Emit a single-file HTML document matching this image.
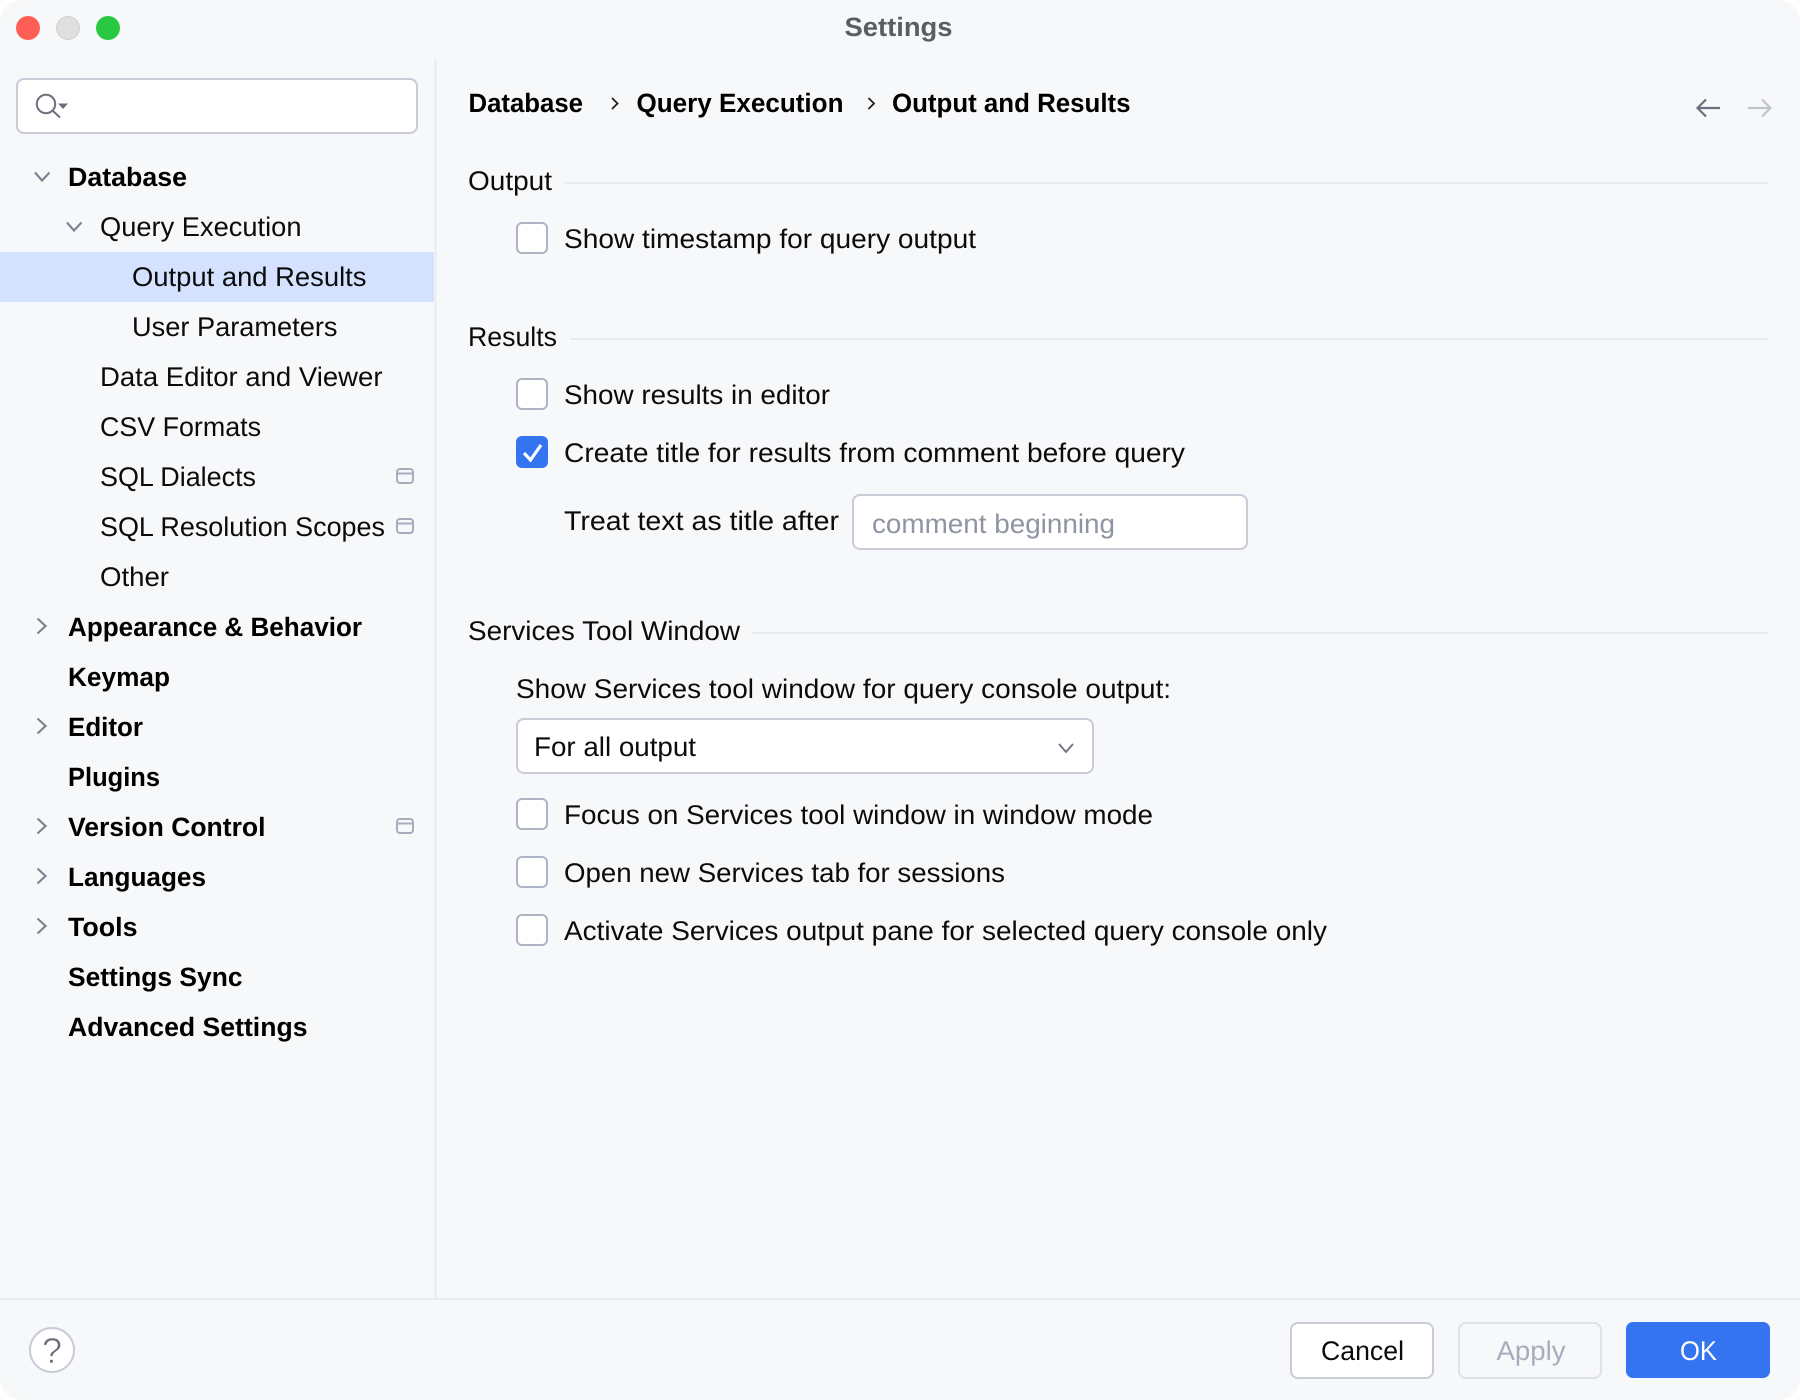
<!DOCTYPE html>
<html lang="en"><head><meta charset="utf-8"><title>Settings</title>
<style>
html,body{margin:0;padding:0;background:#fff;width:1800px;height:1400px;overflow:hidden}
svg{display:block}
text{font-family:"Liberation Sans",sans-serif;font-size:27px;fill:#0b0b0c;text-rendering:geometricPrecision}
.b{font-weight:700;font-size:26.5px;fill:#000}
.chev{fill:none;stroke:#7f8392;stroke-width:2.2}
.cb{fill:#fff;stroke:#aeb3c6;stroke-width:2}
.ln{fill:#ebecf0}
.ic{fill:none;stroke:#a8adbd;stroke-width:2}
</style></head><body>
<svg width="1800" height="1400" viewBox="0 0 1800 1400" xmlns="http://www.w3.org/2000/svg">
<rect width="1800" height="1400" rx="22" fill="#f7f8fa"/>
<!-- traffic lights -->
<circle cx="28" cy="28" r="12" fill="#ff5f57"/>
<circle cx="68" cy="28" r="11.5" fill="#e0e0e0" stroke="#cfcfcf"/>
<circle cx="108" cy="28" r="12" fill="#28c840"/>
<text class="b" x="844.500" y="36" textLength="108" lengthAdjust="spacingAndGlyphs" style="fill:#5a5d63">Settings</text>
<!-- dividers -->
<rect x="434.500" y="58" width="2" height="1241" class="ln"/>
<rect x="0" y="1298" width="1800" height="2" class="ln"/>
<!-- search -->
<rect x="17" y="79" width="400" height="54" rx="7" fill="#fff" stroke="#c9ccd6" stroke-width="2"/>
<circle cx="46" cy="104" r="9.200" fill="none" stroke="#6c707e" stroke-width="2"/>
<path d="M52.500 110.500L60 117.500" fill="none" stroke="#6c707e" stroke-width="2"/>
<path d="M58 103.500H68L63 109Z" fill="#6c707e"/>
<!-- selection -->
<rect x="0" y="252" width="434" height="50" fill="#d4e2ff"/>
<!-- tree chevrons -->
<path class="chev" d="M35 172.500L42 180.500L49.500 172.500"/>
<path class="chev" d="M67 222.500L74 230.500L81.500 222.500"/>
<path class="chev" d="M37.500 618.500L45.500 626L37.500 633.500"/>
<path class="chev" d="M37.500 718.500L45.500 726L37.500 733.500"/>
<path class="chev" d="M37.500 818.500L45.500 826L37.500 833.500"/>
<path class="chev" d="M37.500 868.500L45.500 876L37.500 883.500"/>
<path class="chev" d="M37.500 918.500L45.500 926L37.500 933.500"/>
<!-- tree labels -->
<text class="b" x="68" y="186" textLength="119" lengthAdjust="spacingAndGlyphs">Database</text>
<text x="100" y="236" textLength="201.500" lengthAdjust="spacingAndGlyphs">Query Execution</text>
<text x="132" y="286" textLength="234.500" lengthAdjust="spacingAndGlyphs">Output and Results</text>
<text x="132" y="336" textLength="205.500" lengthAdjust="spacingAndGlyphs">User Parameters</text>
<text x="100" y="386" textLength="282.500" lengthAdjust="spacingAndGlyphs">Data Editor and Viewer</text>
<text x="100" y="436" textLength="161" lengthAdjust="spacingAndGlyphs">CSV Formats</text>
<text x="100" y="486" textLength="156" lengthAdjust="spacingAndGlyphs">SQL Dialects</text>
<text x="100" y="536" textLength="285" lengthAdjust="spacingAndGlyphs">SQL Resolution Scopes</text>
<text x="100" y="586" textLength="69" lengthAdjust="spacingAndGlyphs">Other</text>
<text class="b" x="68" y="636" textLength="294" lengthAdjust="spacingAndGlyphs">Appearance &amp; Behavior</text>
<text class="b" x="68" y="686" textLength="102" lengthAdjust="spacingAndGlyphs">Keymap</text>
<text class="b" x="68" y="736" textLength="75" lengthAdjust="spacingAndGlyphs">Editor</text>
<text class="b" x="68" y="786" textLength="92" lengthAdjust="spacingAndGlyphs">Plugins</text>
<text class="b" x="68" y="836" textLength="197.500" lengthAdjust="spacingAndGlyphs">Version Control</text>
<text class="b" x="68" y="886" textLength="138" lengthAdjust="spacingAndGlyphs">Languages</text>
<text class="b" x="68" y="936" textLength="69.500" lengthAdjust="spacingAndGlyphs">Tools</text>
<text class="b" x="68" y="986" textLength="174.500" lengthAdjust="spacingAndGlyphs">Settings Sync</text>
<text class="b" x="68" y="1036" textLength="239.500" lengthAdjust="spacingAndGlyphs">Advanced Settings</text>
<!-- project icons -->
<g class="ic"><rect x="397" y="469" width="16" height="14" rx="3"/><path d="M397 473.500H413"/></g>
<g class="ic"><rect x="397" y="519" width="16" height="14" rx="3"/><path d="M397 523.500H413"/></g>
<g class="ic"><rect x="397" y="819" width="16" height="14" rx="3"/><path d="M397 823.500H413"/></g>
<!-- breadcrumb -->
<text class="b" x="468.500" y="112" textLength="114.500" lengthAdjust="spacingAndGlyphs">Database</text>
<path d="M612 98L617.500 103.500L612 109" fill="none" stroke="#222" stroke-width="1.800"/>
<text class="b" x="636.500" y="112" textLength="207" lengthAdjust="spacingAndGlyphs">Query Execution</text>
<path d="M868.500 98L874 103.500L868.500 109" fill="none" stroke="#222" stroke-width="1.800"/>
<text class="b" x="892" y="112" textLength="238.500" lengthAdjust="spacingAndGlyphs">Output and Results</text>
<!-- arrows -->
<path d="M1720 108H1698M1706 99.500L1697.500 108L1706 116.500" fill="none" stroke="#6c707e" stroke-width="2.200"/>
<path d="M1748 108H1770M1762 99.500L1770.500 108L1762 116.500" fill="none" stroke="#c2c3c6" stroke-width="2.200"/>
<!-- Output -->
<text x="468" y="190" textLength="84" lengthAdjust="spacingAndGlyphs">Output</text>
<rect x="564" y="182" width="1204" height="2" class="ln"/>
<rect class="cb" x="517" y="223" width="30" height="30" rx="5"/>
<text x="564" y="248" textLength="412" lengthAdjust="spacingAndGlyphs">Show timestamp for query output</text>
<!-- Results -->
<text x="468" y="346" textLength="89" lengthAdjust="spacingAndGlyphs">Results</text>
<rect x="570" y="338" width="1198" height="2" class="ln"/>
<rect class="cb" x="517" y="379" width="30" height="30" rx="5"/>
<text x="564" y="404" textLength="266" lengthAdjust="spacingAndGlyphs">Show results in editor</text>
<rect x="516" y="436" width="32" height="32" rx="6" fill="#3574f0"/>
<path d="M524 453L530.500 460L541 445" fill="none" stroke="#fff" stroke-width="3.200"/>
<text x="564" y="462" textLength="621" lengthAdjust="spacingAndGlyphs">Create title for results from comment before query</text>
<text x="564" y="530" textLength="275" lengthAdjust="spacingAndGlyphs">Treat text as title after</text>
<rect x="853" y="495" width="394" height="54" rx="7" fill="#fff" stroke="#c9ccd6" stroke-width="2"/>
<text x="872" y="533" textLength="243" lengthAdjust="spacingAndGlyphs" style="fill:#8f94a3">comment beginning</text>
<!-- Services -->
<text x="468" y="640" textLength="272" lengthAdjust="spacingAndGlyphs">Services Tool Window</text>
<rect x="752" y="632" width="1016" height="2" class="ln"/>
<text x="516" y="698" textLength="655" lengthAdjust="spacingAndGlyphs">Show Services tool window for query console output:</text>
<rect x="517" y="719" width="576" height="54" rx="7" fill="#fff" stroke="#c9ccd6" stroke-width="2"/>
<text x="534" y="756" textLength="162" lengthAdjust="spacingAndGlyphs">For all output</text>
<path d="M1059 744L1066 752L1073 744" fill="none" stroke="#6c707e" stroke-width="1.800"/>
<rect class="cb" x="517" y="799" width="30" height="30" rx="5"/>
<text x="564" y="824" textLength="589" lengthAdjust="spacingAndGlyphs">Focus on Services tool window in window mode</text>
<rect class="cb" x="517" y="857" width="30" height="30" rx="5"/>
<text x="564" y="882" textLength="441" lengthAdjust="spacingAndGlyphs">Open new Services tab for sessions</text>
<rect class="cb" x="517" y="915" width="30" height="30" rx="5"/>
<text x="564" y="940" textLength="763" lengthAdjust="spacingAndGlyphs">Activate Services output pane for selected query console only</text>
<!-- footer -->
<circle cx="52" cy="1350" r="22" fill="#fff" stroke="#c9ccd6" stroke-width="2"/>
<text x="52" y="1363" text-anchor="middle" style="font-size:36px;fill:#6c707e;stroke:#fff;stroke-width:.6px">?</text>
<rect x="1291" y="1323" width="142" height="55" rx="7" fill="#fff" stroke="#c9ccd6" stroke-width="2"/>
<text x="1321" y="1360" textLength="83" lengthAdjust="spacingAndGlyphs">Cancel</text>
<rect x="1459" y="1323" width="142" height="55" rx="7" fill="none" stroke="#dfe1e8" stroke-width="2"/>
<text x="1496.500" y="1360" textLength="69" lengthAdjust="spacingAndGlyphs" style="fill:#a8adbd">Apply</text>
<rect x="1626" y="1322" width="144" height="56" rx="7" fill="#3574f0"/>
<text x="1680" y="1360" textLength="37" lengthAdjust="spacingAndGlyphs" style="fill:#fff">OK</text>
</svg>
</body></html>
